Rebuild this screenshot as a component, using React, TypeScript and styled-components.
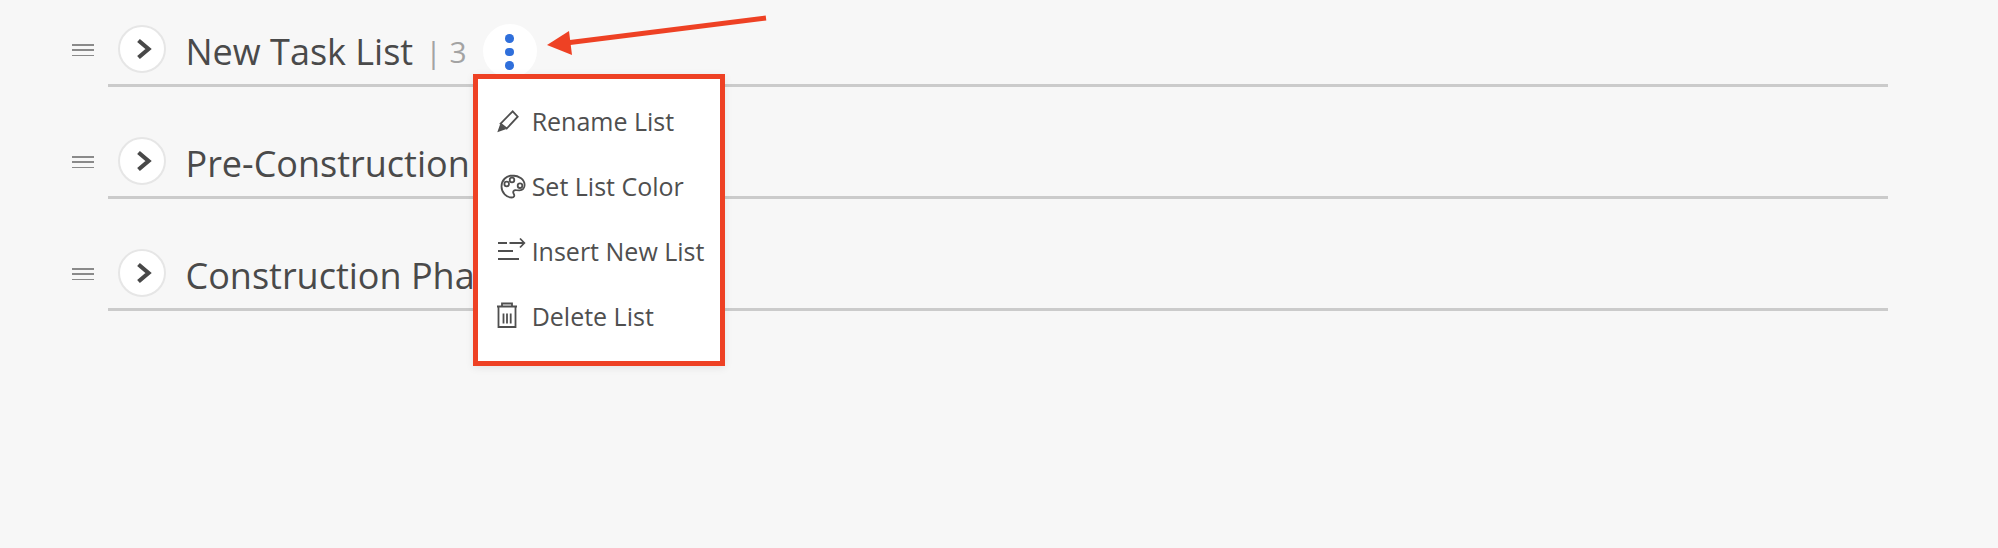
import React from "react";
import styled, { createGlobalStyle } from "styled-components";

const Global = createGlobalStyle`
  html, body { margin: 0; padding: 0; background: #f7f7f7; }
  body { font-family: "Open Sans", "Noto Sans", sans-serif; color: #4a4a4a; }
`;

const Page = styled.div`
  position: relative;
  width: 1998px;
  height: 548px;
  overflow: hidden;
  background: #f7f7f7;
`;

const Lists = styled.div`
  display: flex;
  flex-direction: column;
  gap: 25px;
  padding: 0 110px 0 72px;
`;

const Row = styled.div`
  display: grid;
  grid-template-columns: 36px 1fr;
`;

const Handle = styled.div`
  display: flex;
  flex-direction: column;
  gap: 3.75px;
  width: 22px;
  padding-top: 44px;
  span {
    display: block;
    height: 1.5px;
    background: #8a8a8a;
  }
`;

const Header = styled.div`
  display: flex;
  align-items: center;
  height: 48px;
  padding: 25px 0 11px 10px;
  border-bottom: 3px solid #cbcbcb;
`;

const Toggle = styled.div`
  flex: none;
  display: flex;
  align-items: center;
  justify-content: center;
  box-sizing: border-box;
  width: 48px;
  height: 48px;
  padding-left: 3px;
  border: 2px solid #e6e6e6;
  border-radius: 50%;
  background: #fff;
`;

const Title = styled.div`
  margin: 6px 0 0 19.5px;
  font-size: 36px;
  line-height: 48px;
  white-space: nowrap;
  color: #4a4a4a;
`;

const Count = styled.div`
  margin: 6px 0 0 12px;
  font-size: 30px;
  line-height: 48px;
  white-space: nowrap;
  color: #a3a3a3;
`;

const Kebab = styled.div`
  position: relative;
  z-index: 2;
  flex: none;
  display: flex;
  flex-direction: column;
  align-items: center;
  justify-content: center;
  gap: 5px;
  box-sizing: border-box;
  width: 54px;
  height: 54px;
  padding-top: 2px;
  margin: -1px 0 -5px 16px;
  border-radius: 50%;
  background: #fff;
`;

const Dot = styled.span`
  width: 8.5px;
  height: 8.5px;
  border-radius: 50%;
  background: #2f6fdb;
`;

const Menu = styled.div`
  position: absolute;
  top: 50px;
  left: -10px;
  box-sizing: border-box;
  width: 252px;
  height: 292px;
  padding: 22px 0 0 18px;
  display: flex;
  flex-direction: column;
  gap: 25px;
  background: #fff;
  border: 5px solid #ee4124;
  box-shadow: 0 2px 8px rgba(0, 0, 0, 0.08);
`;

const Item = styled.div`
  display: flex;
  align-items: center;
  gap: 4px;
  height: 40px;
  font-size: 25px;
  line-height: 40px;
  white-space: nowrap;
  color: #4f4f4f;
`;

const Arrow = styled.svg`
  position: absolute;
  left: 540px;
  top: 10px;
  z-index: 3;
`;

const Chevron = () => (
  <svg width="18" height="24" viewBox="0 0 18 24" fill="none">
    <path d="M3.5 3.5L13.5 12L3.5 20.5" stroke="#484848" strokeWidth="4.2" strokeLinejoin="miter" />
  </svg>
);

const iconStroke = { stroke: "#4f4f4f", fill: "none", strokeWidth: 1.8 };

const PencilIcon = () => (
  <svg width="32" height="32" viewBox="0 0 32 32">
    <path d="M16.7 6.3L21.7 11.7L10.7 23.5L4.6 18.6Z" {...iconStroke} />
    <path d="M4.2 19L10.4 24L1.3 27.3Z" fill="#4f4f4f" />
  </svg>
);

const PaletteIcon = () => (
  <svg width="32" height="32" viewBox="0 0 32 32">
    <path
      d="M16.5 5.5C10 5.5 5.5 10.5 5.5 16.5C5.5 22.8 10.5 27.5 15.8 27.5C18.2 27.5 18.8 25.6 17.8 24C16.3 21.6 18 19.8 20.2 20.2L23.5 20.3C26.6 20.3 28.6 18 28.6 15C28.6 9.5 23.2 5.5 16.5 5.5Z"
      {...iconStroke}
    />
    <circle cx="10.7" cy="14" r="2.3" {...iconStroke} />
    <circle cx="16" cy="10" r="2.3" {...iconStroke} />
    <circle cx="24" cy="15.7" r="2.3" {...iconStroke} />
  </svg>
);

const InsertIcon = () => (
  <svg width="32" height="32" viewBox="0 0 32 32">
    <path d="M2 8H11M2 16H17M2 24H23M13.5 8H28M24 3.5L28.3 8L24 12.5" {...iconStroke} />
  </svg>
);

const TrashIcon = () => (
  <svg width="32" height="32" viewBox="0 0 32 32">
    <path d="M1 6.5H21M6 6.5V3.5H16V6.5M2.5 6.5V27H19.5V6.5" {...iconStroke} />
    <path d="M7.5 13.5V23.5M11 13.5V23.5M14.7 13.5V23.5" {...iconStroke} />
  </svg>
);

const menuItems = [
  { label: "Rename List", icon: <PencilIcon /> },
  { label: "Set List Color", icon: <PaletteIcon /> },
  { label: "Insert New List", icon: <InsertIcon /> },
  { label: "Delete List", icon: <TrashIcon /> },
];

const lists = [
  { title: "New Task List", count: 3, open: true },
  { title: "Pre-Construction Phase" },
  { title: "Construction Phase" },
];

export default function App() {
  return (
    <Page>
      <Global />
      <Lists>
        {lists.map((list) => (
          <Row key={list.title}>
            <Handle>
              <span />
              <span />
              <span />
            </Handle>
            <Header>
              <Toggle>
                <Chevron />
              </Toggle>
              <Title>{list.title}</Title>
              {list.count !== undefined && <Count>| {list.count}</Count>}
              {list.open && (
                <Kebab>
                  <Dot />
                  <Dot />
                  <Dot />
                  <Menu>
                    {menuItems.map((item) => (
                      <Item key={item.label}>
                        {item.icon}
                        {item.label}
                      </Item>
                    ))}
                  </Menu>
                </Kebab>
              )}
            </Header>
          </Row>
        ))}
      </Lists>
      <Arrow width="240" height="60" viewBox="0 0 240 60">
        <path d="M226 8L26 33" stroke="#ee4124" strokeWidth="5" fill="none" />
        <path d="M7 35L29 21L32 45Z" fill="#ee4124" />
      </Arrow>
    </Page>
  );
}
